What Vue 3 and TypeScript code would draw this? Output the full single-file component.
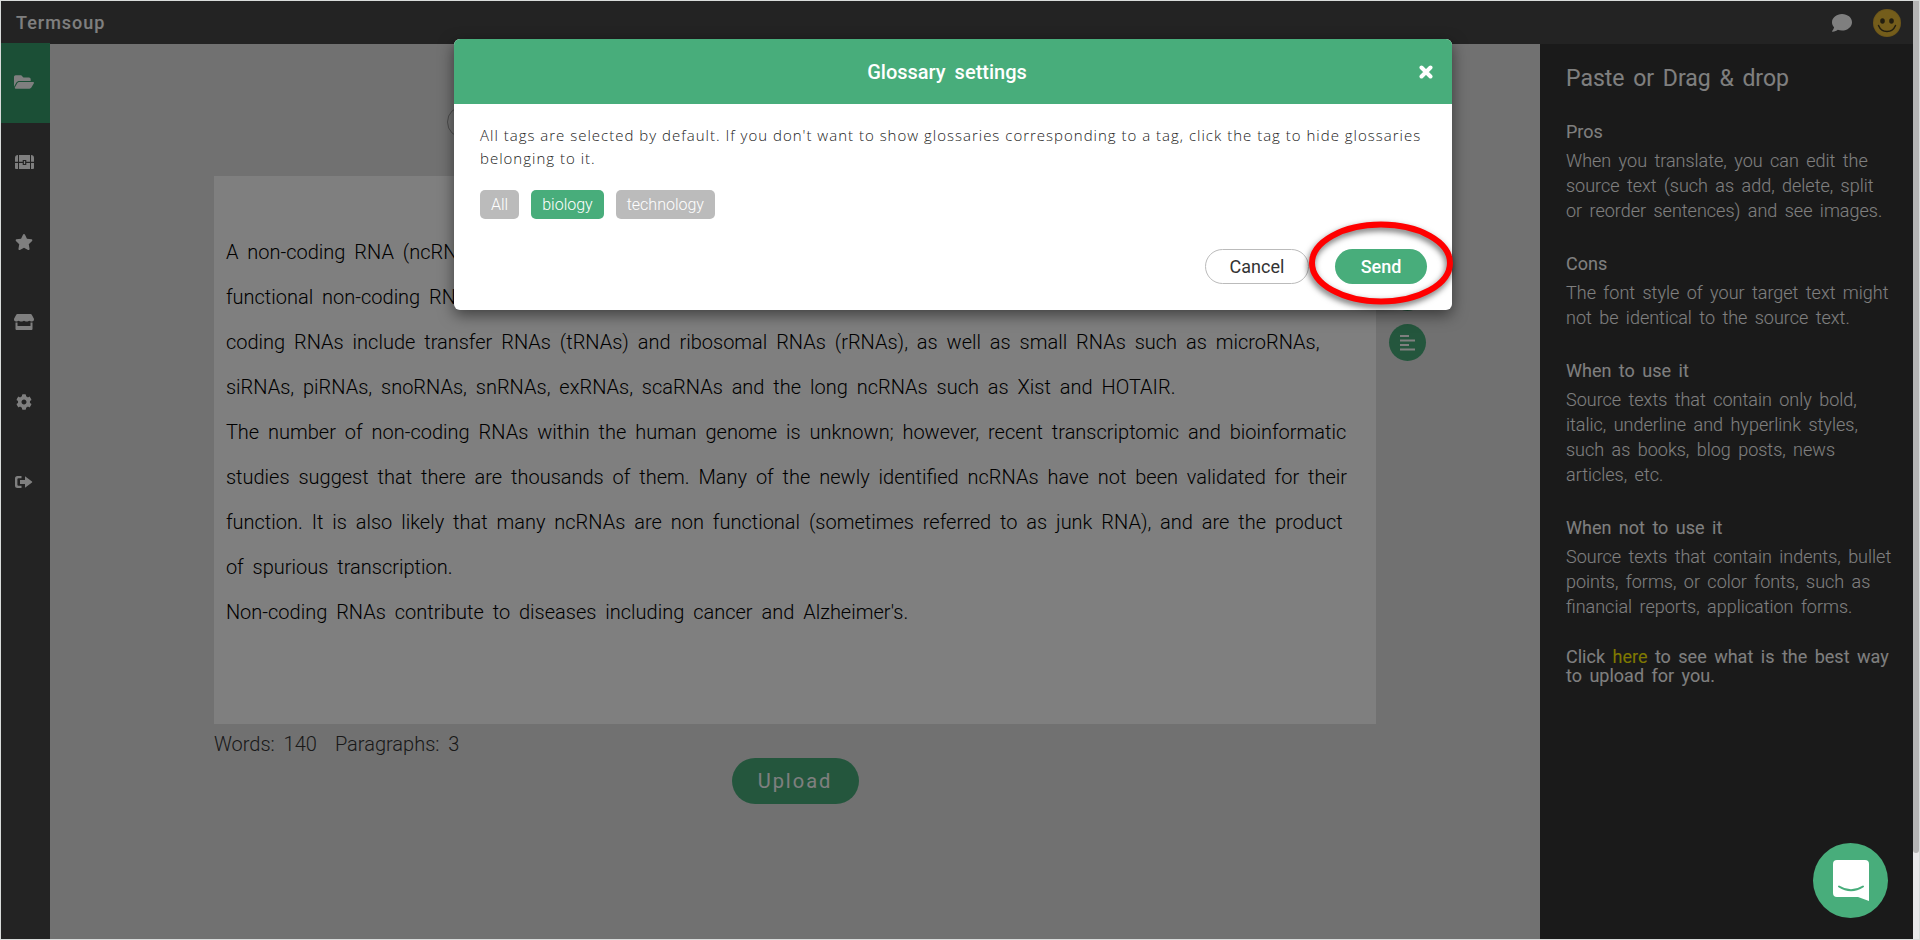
<script setup lang="ts">
import { ref } from 'vue'

interface Section { title: string; body: string }
interface Tag { name: string; active: boolean }
interface NavIcon { name: string; label: string }

const nav: NavIcon[] = [
  { name: 'folder', label: 'Projects' },
  { name: 'chest', label: 'Glossaries' },
  { name: 'star', label: 'Favorites' },
  { name: 'store', label: 'Store' },
  { name: 'gear', label: 'Settings' },
  { name: 'exit', label: 'Log out' },
]

const sections: Section[] = [
  { title: 'Pros', body: 'When you translate, you can edit the source text (such as add, delete, split or reorder sentences) and see images.' },
  { title: 'Cons', body: 'The font style of your target text might not be identical to the source text.' },
  { title: 'When to use it', body: 'Source texts that contain only bold, italic, underline and hyperlink styles, such as books, blog posts, news articles, etc.' },
  { title: 'When not to use it', body: 'Source texts that contain indents, bullet points, forms, or color fonts, such as financial reports, application forms.' },
]

const tags = ref<Tag[]>([
  { name: 'All', active: false },
  { name: 'biology', active: true },
  { name: 'technology', active: false },
])

const source = ref(
  [
    'A non-coding RNA (ncRNA) is an RNA molecule that is not translated into a protein. The DNA sequence from which a functional non-coding RNA is transcribed is often called an RNA gene. Abundant and functionally important types of non-coding RNAs include transfer RNAs (tRNAs) and ribosomal RNAs (rRNAs), as well as small RNAs such as microRNAs, siRNAs, piRNAs, snoRNAs, snRNAs, exRNAs, scaRNAs and the long ncRNAs such as Xist and HOTAIR.',
    'The number of non-coding RNAs within the human genome is unknown; however, recent transcriptomic and bioinformatic studies suggest that there are thousands of them. Many of the newly identified ncRNAs have not been validated for their function. It is also likely that many ncRNAs are non functional (sometimes referred to as junk RNA), and are the product of spurious transcription.',
    "Non-coding RNAs contribute to diseases including cancer and Alzheimer's.",
  ].join('\n'),
)
</script>

<template>
  <div class="window">
    <div class="app">
      <header class="topbar">
        <span class="brand">Termsoup</span>
        <div class="top-actions">
          <button class="plain" aria-label="Messages">
            <svg width="20" height="18" viewBox="0 0 20 18"><path d="M10 0C4.500 0 0 3.700 0 8.200c0 1.900.8 3.700 2.100 5.100C1.700 15.200.5 16.500.1 17c-.2.300 0 .7.400.7 2.300 0 4.200-1 5.300-1.900 1.300.5 2.700.7 4.200.7 5.500 0 10-3.700 10-8.300S15.500 0 10 0z" /></svg>
          </button>
          <button class="plain" aria-label="Account">
            <svg width="28" height="28" viewBox="0 0 28 28">
              <circle cx="14" cy="14" r="14" fill="#dcae34" />
              <circle cx="14" cy="14" r="13" fill="#ffd43f" fill-opacity=".35" />
              <ellipse cx="9.500" cy="12" rx="2.300" ry="2.800" fill="#463c1e" />
              <ellipse cx="18.500" cy="12" rx="2.300" ry="2.800" fill="#463c1e" />
              <path d="M5.500 16.500Q8 22.500 14 22.500T22.500 16.500" fill="none" stroke="#463c1e" stroke-width="1.500" stroke-linecap="round" />
            </svg>
          </button>
        </div>
      </header>

      <div class="body">
        <nav class="rail">
          <a v-for="(item, i) in nav" :key="item.name" href="#" :aria-label="item.label" class="rail-item" :class="{ current: i === 0 }">
            <svg v-if="item.name === 'folder'" width="20" height="18" viewBox="0 0 576 512"><path d="M572.694 292.093L500.27 416.248A63.997 63.997 0 0 1 444.989 448H45.025c-18.523 0-30.064-20.093-20.731-36.093l72.424-124.155A64 64 0 0 1 152 256h399.964c18.523 0 30.064 20.093 20.730 36.093zM152 224h328v-48c0-26.510-21.490-48-48-48H272l-64-64H48C21.490 64 0 85.490 0 112v278.046l69.077-118.418C86.214 242.250 117.989 224 152 224z" /></svg>
            <svg v-else-if="item.name === 'chest'" width="19" height="14" viewBox="0 0 19 14"><path d="M3 0v6.800H0V3a3 3 0 0 1 3-3zM4 0h11v6.800h-3.700V5H7.700v1.800H4zM16 0a3 3 0 0 1 3 3v3.800h-3zM0 8h3v6H1a1 1 0 0 1-1-1zM4 8h3.700v2h3.600V8H15v6H4zM16 8h3v5a1 1 0 0 1-1 1h-2zM8.900 6h1.200v3H8.900z" /></svg>
            <svg v-else-if="item.name === 'star'" width="18" height="16" viewBox="0 0 576 512"><path d="M259.300 17.800L194 150.200 47.900 171.500c-26.200 3.800-36.700 36.100-17.700 54.600l105.700 103-25 145.500c-4.500 26.300 23.200 46 46.400 33.700L288 439.600l130.700 68.700c23.200 12.200 50.900-7.400 46.400-33.700l-25-145.500 105.700-103c19-18.500 8.500-50.800-17.700-54.600L382 150.200 316.700 17.800c-11.700-23.600-45.600-23.900-57.400 0z" /></svg>
            <svg v-else-if="item.name === 'store'" width="20" height="16" viewBox="0 0 20 16"><path d="M3.500 0h13a1.500 1.500 0 0 1 1.300.7l2 3.800c.6 1.800-.4 3-1.800 3-1.300 0-2-.8-2.700-.8s-1.300.8-2.600.8-2-.8-2.700-.8-1.400.8-2.700.8-2-.8-2.700-.8-1.300.8-2.600.8C.600 7.500-.4 6.300.2 4.500l2-3.800A1.500 1.500 0 0 1 3.500 0zM1.500 8.500h2V12h13V8.500h2V15a1 1 0 0 1-1 1h-15a1 1 0 0 1-1-1z" /></svg>
            <svg v-else-if="item.name === 'gear'" width="16" height="16" viewBox="0 0 512 512"><path d="M487.400 315.700l-42.600-24.600c4.300-23.200 4.300-47 0-70.200l42.600-24.600c4.900-2.800 7.100-8.600 5.500-14-11.100-35.600-30-67.800-54.700-94.600-3.800-4.100-10-5.100-14.800-2.300L380.800 110c-17.900-15.400-38.500-27.300-60.800-35.100V25.800c0-5.600-3.900-10.500-9.400-11.700-36.700-8.200-74.300-7.800-109.200 0-5.500 1.200-9.400 6.100-9.400 11.700V75c-22.200 7.900-42.800 19.800-60.800 35.100L88.700 85.500c-4.900-2.800-11-1.900-14.800 2.300-24.700 26.700-43.600 58.900-54.700 94.600-1.700 5.400.6 11.200 5.500 14L67.300 221c-4.300 23.200-4.300 47 0 70.200l-42.600 24.600c-4.900 2.800-7.100 8.600-5.500 14 11.100 35.600 30 67.800 54.700 94.600 3.800 4.100 10 5.100 14.800 2.300l42.600-24.600c17.900 15.400 38.500 27.300 60.800 35.100v49.200c0 5.600 3.900 10.500 9.400 11.700 36.700 8.200 74.300 7.800 109.200 0 5.500-1.200 9.400-6.100 9.400-11.700v-49.200c22.200-7.900 42.800-19.800 60.800-35.100l42.600 24.600c4.900 2.800 11 1.900 14.800-2.300 24.700-26.700 43.600-58.900 54.700-94.600 1.500-5.500-.7-11.300-5.600-14.100zM256 336c-44.100 0-80-35.900-80-80s35.900-80 80-80 80 35.900 80 80-35.900 80-80 80z" /></svg>
            <svg v-else width="18" height="12" viewBox="0 0 18 12"><path d="M6.500 0v2.200H3.400a1 1 0 0 0-1 1v5.600a1 1 0 0 0 1 1h3.100V12H2.500A2.500 2.500 0 0 1 0 9.500v-7A2.500 2.500 0 0 1 2.500 0zM10 .3l7 5.300a.5.500 0 0 1 0 .8l-7 5.300V8H5V4h5z" /></svg>
          </a>
        </nav>

        <main class="workspace">
          <button class="format-switch" aria-label="Choose upload method"></button>
          <div class="editor-row">
            <textarea v-model="source" class="editor" aria-label="Source text" spellcheck="false"></textarea>
            <div class="tools">
              <button class="tool" aria-label="Clear"></button>
              <button class="tool" aria-label="Align paragraphs">
                <svg width="15" height="16" viewBox="0 0 15 16"><path d="M0 0h9v2H0zM0 4.500h15v2H0zM0 9h9v2H0zM0 13.500h15v2H0z" /></svg>
              </button>
            </div>
          </div>
          <div class="counts"><span>Words: 140</span><span>Paragraphs: 3</span></div>
          <button class="upload">Upload</button>
        </main>

        <aside class="help">
          <h2>Paste or Drag &amp; drop</h2>
          <section v-for="s in sections" :key="s.title">
            <h3>{{ s.title }}</h3>
            <p>{{ s.body }}</p>
          </section>
          <p class="more">Click <a href="#">here</a> to see what is the best way to upload for you.</p>
        </aside>
      </div>
      <div class="backdrop"></div>
    </div>

    <div class="scrollbar"><div class="thumb"></div></div>

    <div class="modal" role="dialog" aria-modal="true" aria-labelledby="modal-title">
      <div class="modal-head">
        <h1 id="modal-title">Glossary settings</h1>
        <button class="close" aria-label="Close">
          <svg width="14" height="14" viewBox="0 0 14 14"><path d="M2.500 2.500l9 9M11.500 2.500l-9 9" fill="none" stroke="#fff" stroke-width="4" stroke-linecap="round" /></svg>
        </button>
      </div>
      <div class="modal-body">
        <p>All tags are selected by default. If you don't want to show glossaries corresponding to a tag, click the tag to hide glossaries belonging to it.</p>
        <div class="tags">
          <button v-for="t in tags" :key="t.name" class="tag" :class="{ on: t.active }" @click="t.active = !t.active">{{ t.name }}</button>
        </div>
        <div class="modal-actions">
          <button class="cancel">Cancel</button>
          <span class="send-wrap">
            <button class="send">Send</button>
            <svg class="ring" width="160" height="104" viewBox="0 0 160 104"><ellipse cx="80" cy="48" rx="69" ry="38.500" fill="none" stroke="#f00" stroke-width="6" /></svg>
          </span>
        </div>
      </div>
    </div>

    <button class="chat" aria-label="Open chat">
      <svg width="36" height="42" viewBox="0 0 36 42">
        <path d="M4 0h28a4 4 0 0 1 4 4v37l-11-4H4a4 4 0 0 1-4-4V4a4 4 0 0 1 4-4z" fill="#fff" />
        <path d="M6 26.500Q18 34 30 26.500" fill="none" stroke="#48ad7b" stroke-width="2" stroke-linecap="round" />
      </svg>
    </button>
  </div>
</template>

<style>
body {
  margin: 0;
}
</style>

<style scoped>
* {
  box-sizing: border-box;
}
button {
  border: 0;
  padding: 0;
  font-family: inherit;
  word-spacing: inherit;
  cursor: pointer;
}
h1,
h2,
h3,
p {
  margin: 0;
}
svg {
  display: block;
  fill: currentColor;
}
.window {
  position: relative;
  display: flex;
  min-height: 100vh;
  border: 1px solid #d9dcdb;
  font-family: Roboto, "Liberation Sans", sans-serif;
  word-spacing: 4px;
}
.app {
  position: relative;
  flex: 1;
  display: flex;
  flex-direction: column;
}
.backdrop {
  position: absolute;
  inset: 0;
  background: rgba(0, 0, 0, 0.5);
}
.topbar {
  display: flex;
  align-items: center;
  justify-content: space-between;
  height: 43px;
  padding: 0 12px 0 15px;
  background: #464646;
  color: #fff;
}
.brand {
  font-size: 18px;
  font-weight: 500;
  letter-spacing: 1px;
}
.top-actions {
  display: flex;
  align-items: center;
  gap: 21px;
}
.plain {
  background: none;
  color: #fff;
}
.body {
  flex: 1;
  display: flex;
}
.rail {
  width: 49px;
  margin-top: -1px;
  background: #464646;
}
.rail-item {
  display: flex;
  align-items: center;
  justify-content: center;
  height: 80px;
  padding: 0 3px 2px 0;
  color: #fff;
}
.rail-item.current {
  background: #369e6c;
}
.workspace {
  flex: 1;
  display: flex;
  flex-direction: column;
  align-items: center;
  background: #e2e2e2;
}
.format-switch {
  width: 46.700%;
  height: 32px;
  margin: 62px 0 38px;
  border: 1px solid #999;
  border-radius: 16px;
  background: none;
}
.editor-row {
  position: relative;
  width: 78%;
  display: flex;
}
.editor {
  flex: 1;
  height: 548px;
  padding: 54px 12px;
  border: 0;
  resize: none;
  overflow: hidden;
  background: #fff;
  color: #000;
  font: 300 20px/45px Roboto, "Liberation Sans", sans-serif;
  word-spacing: inherit;
}
.tools {
  position: absolute;
  left: 100%;
  top: 98px;
  margin-left: 13px;
  display: grid;
  gap: 13px;
}
.tool {
  display: grid;
  place-items: center;
  width: 37px;
  height: 37px;
  border-radius: 50%;
  background: #48ad7b;
  color: #fff;
}
.counts {
  width: 78%;
  display: flex;
  gap: 18px;
  padding: 8px 0 2px;
  font-size: 20px;
  font-weight: 300;
  line-height: 24px;
  color: #333;
}
.upload {
  width: 127px;
  height: 46px;
  border-radius: 23px;
  background: #48ad7b;
  color: #fff;
  font-size: 20px;
  letter-spacing: 2px;
}
.help {
  width: 373px;
  padding: 19px 20px 19px 26px;
  background: #343434;
  color: #fff;
  font-size: 18px;
  line-height: 25px;
  word-spacing: 3px;
}
.help h2 {
  margin-bottom: 24px;
  font-size: 23px;
  font-weight: 400;
  line-height: 32px;
}
.help section {
  margin-bottom: 28px;
}
.help h3 {
  margin-bottom: 4px;
  font-size: 18px;
  font-weight: 400;
}
.help p {
  font-weight: 300;
}
.help .more {
  font-weight: 400;
  line-height: 19px;
}
.more a {
  color: #fff200;
  text-decoration: none;
}
.scrollbar {
  width: 6px;
  background: #e9e9ea;
}
.thumb {
  height: 852px;
  border-radius: 0 0 3px 3px;
  background: #b5b5b5;
}
.modal {
  position: absolute;
  top: 38px;
  left: 0;
  right: 14px;
  width: 998px;
  margin: 0 auto;
  border-radius: 6px;
  background: #fff;
  box-shadow: 0 5px 15px rgba(0, 0, 0, 0.5);
}
.modal-head {
  position: relative;
  display: grid;
  place-items: center;
  height: 65px;
  border-radius: 6px 6px 0 0;
  background: #48ad7b;
  color: #fff;
}
.modal-head h1 {
  padding-right: 12px;
  font-size: 20px;
  font-weight: 500;
}
.close {
  position: absolute;
  right: 19px;
  background: none;
}
.modal-body {
  padding: 20px 25px 26px 26px;
}
.modal-body p {
  font-family: "Open Sans", "Noto Sans", sans-serif;
  font-size: 15px;
  font-weight: 300;
  line-height: 23px;
  letter-spacing: 1px;
  word-spacing: 0;
  color: #222;
}
.tags {
  display: flex;
  gap: 12px;
  margin-top: 20px;
}
.tag {
  height: 29px;
  padding: 0 11px;
  border-radius: 5px;
  background: #bbb;
  color: #fff;
  font-size: 16px;
  font-weight: 300;
}
.tag.on {
  background: #48ad7b;
}
.modal-actions {
  display: flex;
  justify-content: flex-end;
  gap: 26px;
  margin-top: 30px;
}
.cancel,
.send {
  height: 35px;
  border-radius: 18px;
  font-size: 18px;
}
.cancel {
  width: 104px;
  border: 1px solid #bbb;
  background: #fff;
  color: #333;
}
.send-wrap {
  position: relative;
}
.send {
  width: 92px;
  background: #48ad7b;
  color: #fff;
  font-weight: 500;
}
.ring {
  position: absolute;
  left: -34px;
  top: -34px;
  pointer-events: none;
  filter: drop-shadow(-1px 3px 3px rgba(0, 0, 0, 0.6));
}
.chat {
  position: absolute;
  right: 31px;
  bottom: 21px;
  display: grid;
  place-items: center;
  width: 75px;
  height: 75px;
  border-radius: 50%;
  background: #48ad7b;
}
</style>
